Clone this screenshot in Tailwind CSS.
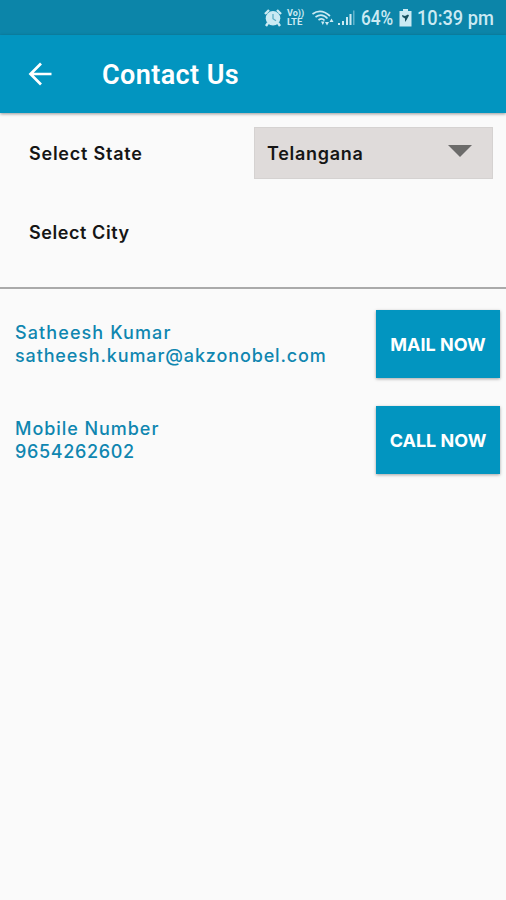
<!DOCTYPE html>
<html lang="en">
<head>
    <meta charset="UTF-8">
    <meta name="viewport" content="width=device-width, initial-scale=1.0">
    <title>Contact Us</title>
    <script src="https://cdn.jsdelivr.net/npm/@tailwindcss/browser@4"></script>
</head>
<body class="h-[900px] overflow-hidden bg-[#fafafa] font-['Inter',sans-serif]">
    <!-- Status Bar -->
    <div class="flex h-[35px] items-center bg-[#0c85a9] pt-px pl-[264px] font-['Roboto',sans-serif] text-[20px] font-medium text-[#cbeaf3]">
        <svg class="h-[18px] w-[18px] shrink-0" viewBox="0 0 18 18" fill="none">
            <path d="M1 5 5 1M13 1l4 4M4 14l-2 3M14 14l2 3" stroke="currentColor" stroke-width="2.4"/>
            <circle cx="9" cy="9.3" r="7.3" fill="currentColor"/>
            <path d="M9 5v4.7l3 2" stroke="#5eaec5" stroke-width="1.3"/>
        </svg>
        <div class="ml-[5px] w-[18px] shrink-0 text-[9px] leading-[9px] font-bold">
            <div>Vo))</div>
            <div class="origin-left scale-x-[1.06]">LTE</div>
        </div>
        <svg class="ml-[7px] h-[18px] w-[23px] shrink-0" viewBox="0 0 23 18" fill="none" stroke="currentColor" stroke-width="1.7">
            <path d="M.5 5Q9-1 18 7M3.500 8Q10 3.500 15.500 9.500M6.500 11Q10 8.500 12.500 11.500"/>
            <path d="M9 12.500h3.500l-1.700 3.500zM13 13h4l-2 3.500zM17.500 13h4l-2-3.500z" fill="currentColor" stroke="none"/>
        </svg>
        <svg class="ml-[3px] h-[18px] w-[17px] shrink-0" viewBox="0 0 17 18" fill="currentColor">
            <path d="M0 14h2v2H0zM4 12h2v4H4zM8 8h2v8H8zM11.500 5h2v11h-2z"/>
            <path d="M15 1.500h1.500V16H15z" opacity=".45"/>
        </svg>
        <div class="ml-[6px] w-[34px] shrink-0"><span class="inline-block origin-left scale-x-[.86]">64%</span></div>
        <svg class="ml-[4px] h-[18px] w-[13px] shrink-0" viewBox="0 0 13 18">
            <path d="M4 0h5v2h3.500v15.500H.5V2H4z" fill="currentColor"/>
            <path d="m3 6 3 1 3-1.500 1 1L7.500 11 6 13V9.500L3.500 8z" fill="#17505f"/>
        </svg>
        <div class="ml-[5px] shrink-0"><span class="inline-block origin-left scale-x-[.91] whitespace-nowrap">10:39 pm</span></div>
    </div>

    <!-- Header -->
    <header class="relative flex h-[78px] items-center bg-[#0295c0] text-white shadow-[0_1px_3px_rgba(0,0,0,0.4)]">
        <svg class="mb-px ml-7 h-6 w-6" viewBox="0 0 24 24" fill="none" stroke="currentColor" stroke-width="2.700">
            <path d="M23.500 12H2.500M13 1.500 2.500 12 13 22.500"/>
        </svg>
        <h1 class="mt-[3px] ml-[50px] font-['Roboto',sans-serif] text-[27px] font-semibold tracking-[0.4px]">Contact Us</h1>
    </header>

    <!-- Location -->
    <section class="h-[176px] border-b-2 border-[#aaaaaa] pt-[14px] text-[18px] font-semibold text-[#151515]">
        <div class="flex h-[52px] items-center">
            <span class="w-[254px] pl-[29px] tracking-[0.77px]">Select State</span>
            <div class="flex h-[52px] w-[239px] items-center justify-between border border-[#d5d2d1] bg-[#dfdbda] pr-5 pl-3">
                <span class="tracking-[0.7px]">Telangana</span>
                <svg class="mb-1 h-3 w-6" viewBox="0 0 24 12"><path d="M0 0h24L12 12z" fill="#6c6b6a"/></svg>
            </div>
        </div>
        <div class="mt-[27px] flex h-[52px] items-center pl-[29px] tracking-[0.57px]">Select City</div>
    </section>

    <!-- Contacts -->
    <main class="space-y-[27px] pt-5 pr-[6px] pl-[15px] text-[18px] leading-[23px] font-medium text-[#0f86b0]">
        <div class="flex h-[69px] items-center justify-between">
            <div>
                <p class="tracking-[1.1px]">Satheesh Kumar</p>
                <p class="tracking-[0.87px]">satheesh.kumar@akzonobel.com</p>
            </div>
            <button class="h-[68px] w-[124px] bg-[#0295c0] pt-0.5 font-bold text-white shadow-[0_1px_3px_rgba(0,0,0,0.35)]">MAIL NOW</button>
        </div>
        <div class="flex h-[69px] items-center justify-between">
            <div>
                <p class="tracking-[0.95px]">Mobile Number</p>
                <p class="tracking-[0.65px]">9654262602</p>
            </div>
            <button class="h-[68px] w-[124px] bg-[#0295c0] pt-0.5 font-bold text-white shadow-[0_1px_3px_rgba(0,0,0,0.35)]">CALL NOW</button>
        </div>
    </main>
</body>
</html>
